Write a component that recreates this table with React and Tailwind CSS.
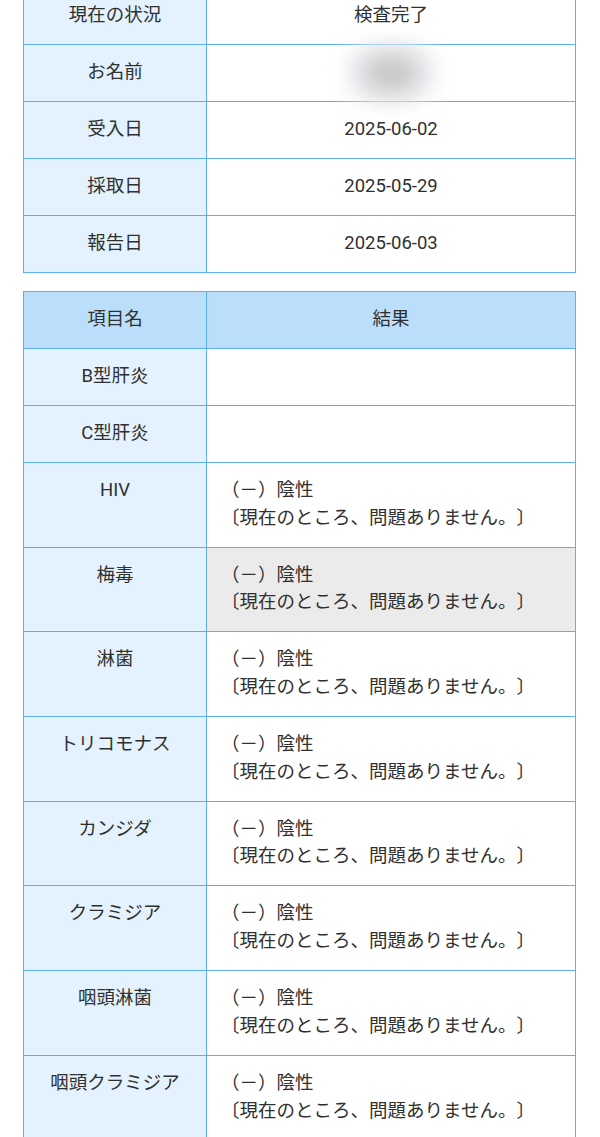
const info = [
  { label: '現在の状況', value: '検査完了' },
  { label: 'お名前', value: null },
  { label: '受入日', value: '2025-06-02' },
  { label: '採取日', value: '2025-05-29' },
  { label: '報告日', value: '2025-06-03' },
];

const results = [
  { name: 'B型肝炎', result: false },
  { name: 'C型肝炎', result: false },
  { name: 'HIV', result: true },
  { name: '梅毒', result: true, highlight: true },
  { name: '淋菌', result: true },
  { name: 'トリコモナス', result: true },
  { name: 'カンジダ', result: true },
  { name: 'クラミジア', result: true },
  { name: '咽頭淋菌', result: true },
  { name: '咽頭クラミジア', result: true },
];

const cell = 'border border-[#5eaef6] py-[14.15px] align-top';

export default function App() {
  return (
    <div
      className="min-h-screen bg-white px-[23px] text-[18.5px] leading-[27.7px] text-[#303030] overflow-hidden [text-spacing-trim:space-all]"
      style={{ fontFamily: 'Roboto, "Noto Sans CJK JP", "Noto Sans", sans-serif' }}
    >
      <table className="w-[553px] border-collapse -mt-[13px] table-fixed">
        <colgroup>
          <col className="w-[183px]" />
          <col />
        </colgroup>
        <tbody>
          {info.map((row) => (
            <tr key={row.label}>
              <td className={`${cell} px-2 bg-[#e3f2fd] text-center`}>{row.label}</td>
              <td className={`${cell} px-2 text-center`}>
                {row.value ? (
                  row.value
                ) : (
                  <div className="relative h-[27.7px]">
                    <div className="absolute left-1/2 top-1/2 -translate-x-1/2 -translate-y-1/2 w-[90px] h-[60px] rounded-full bg-[#eef0f4] blur-[10px]" />
                    <div className="absolute left-1/2 top-1/2 -translate-x-1/2 -translate-y-1/2 w-[56px] h-[36px] rounded-full bg-[#c4c4c4] blur-[12px]" />
                  </div>
                )}
              </td>
            </tr>
          ))}
        </tbody>
      </table>

      <table className="w-[553px] border-collapse mt-[18px] table-fixed">
        <colgroup>
          <col className="w-[183px]" />
          <col />
        </colgroup>
        <thead>
          <tr>
            <th className={`${cell} px-2 bg-[#bbdefb] text-center font-normal`}>項目名</th>
            <th className={`${cell} px-2 bg-[#bbdefb] text-center font-normal`}>結果</th>
          </tr>
        </thead>
        <tbody>
          {results.map((row) => (
            <tr key={row.name}>
              <td className={`${cell} px-2 bg-[#e3f2fd] text-center`}>{row.name}</td>
              <td className={`${cell} pl-[14px] pr-2 text-left ${row.highlight ? 'bg-[#ebebeb]' : 'bg-white'}`}>
                {row.result ? (
                  <>
                    <div>（－）陰性</div>
                    <div>〔現在のところ、問題ありません。〕</div>
                  </>
                ) : (
                  <div className="h-[27.7px]" />
                )}
              </td>
            </tr>
          ))}
        </tbody>
      </table>
    </div>
  );
}
